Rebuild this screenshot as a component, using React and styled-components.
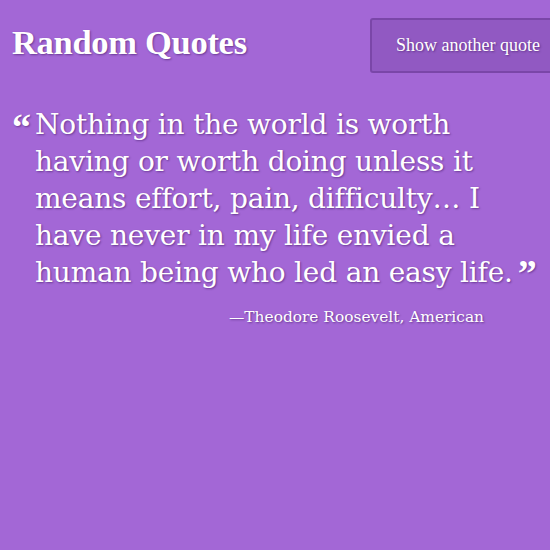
import React from 'react';
import styled, {createGlobalStyle} from 'styled-components';

const GlobalStyle = createGlobalStyle`
    html, body {
        margin: 0;
        padding: 0;
        background: #a367d6;
        overflow: hidden;
    }
    body {
        min-height: 550px;
    }
`;

const Page = styled.div`
    width: 550px;
    height: 550px;
    overflow: hidden;
    color: #fff;
    text-shadow: 1px 1px 2px rgba(40, 0, 70, 0.45);
`;

const Header = styled.header`
    display: flex;
    align-items: flex-start;
    justify-content: space-between;
    width: 566px;
    padding: 18px 0 0 12px;
    box-sizing: border-box;
`;

const Title = styled.h1`
    margin: 7px 0 0;
    font-family: "Liberation Serif", serif;
    font-weight: bold;
    font-size: 34.5px;
    line-height: 1;
    letter-spacing: -0.3px;
`;

const Button = styled.button`
    flex-shrink: 0;
    height: 55px;
    padding: 0 24px;
    background: #9159c2;
    border: 2px solid #7a46a8;
    border-radius: 3px;
    color: #fff;
    font-family: "Liberation Serif", serif;
    font-size: 18px;
    text-shadow: 1px 1px 2px rgba(40, 0, 70, 0.45);
    cursor: pointer;
`;

const QuoteBlock = styled.blockquote`
    display: flex;
    margin: 33px 0 0 12px;
    width: 538px;
`;

const Mark = styled.span`
    flex-shrink: 0;
    width: 23px;
    font-family: "Liberation Serif", serif;
    font-weight: bold;
    font-size: 38px;
    line-height: 1;
    margin-top: 2px;
`;

const QuoteText = styled.p`
    margin: 0;
    width: 515px;
    font-family: "DejaVu Serif", serif;
    font-size: 28px;
    letter-spacing: -0.2px;
    line-height: 37px;
`;

const NoBreak = styled.span`
    white-space: nowrap;
`;

const CloseMark = styled.span`
    font-family: "Liberation Serif", serif;
    font-weight: bold;
    font-size: 38px;
    line-height: 0;
    vertical-align: -4px;
    margin-left: 5px;
`;

const Author = styled.p`
    margin: 17px 0 0;
    width: 484px;
    text-align: right;
    font-family: "DejaVu Serif", serif;
    font-size: 15.4px;
`;

export default function App() {
    return (
        <Page>
            <GlobalStyle />
            <Header>
                <Title>Random Quotes</Title>
                <Button>Show another quote</Button>
            </Header>
            <QuoteBlock>
                <Mark>“</Mark>
                <QuoteText>
                    Nothing in the world is worth having or worth doing unless it means effort, pain, difficulty… I have never in my life envied a human being who led an easy{' '}
                    <NoBreak>life.<CloseMark>”</CloseMark></NoBreak>
                </QuoteText>
            </QuoteBlock>
            <Author>—Theodore Roosevelt, American</Author>
        </Page>
    );
}
